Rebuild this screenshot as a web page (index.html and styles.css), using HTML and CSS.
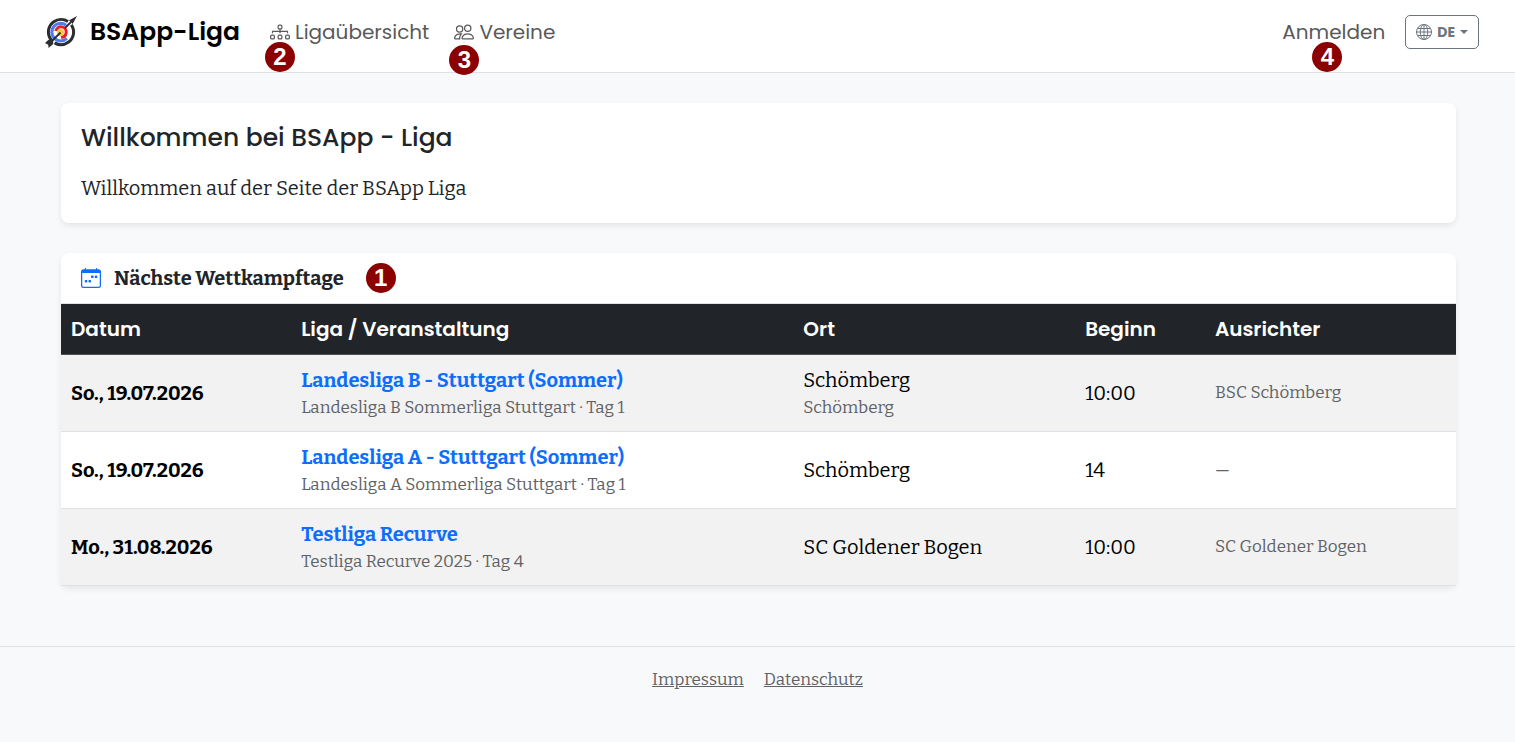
FILE: index.html
```html
<!DOCTYPE html>
<html lang="de">
<head>
<meta charset="utf-8">
<meta name="viewport" content="width=device-width, initial-scale=1">
<title>BSApp-Liga</title>
<link rel="stylesheet" href="styles.css">
</head>
<body>
<header class="navbar">
  <a class="brand" href="#">
    <svg class="brand-logo" viewBox="0 0 34 34" aria-hidden="true">
      <circle cx="17" cy="17" r="12.6" fill="#fff" stroke="#2b2d30" stroke-width="3" stroke-dasharray="34 3 37 5.2" transform="rotate(-35 17 17)"/>
      <circle cx="16.6" cy="17.2" r="8.8" fill="none" stroke="#4f7df0" stroke-width="3.2" stroke-dasharray="40 15.3" transform="rotate(45 16.6 17.2)"/>
      <circle cx="17" cy="17" r="5.2" fill="none" stroke="#ee1c25" stroke-width="3" stroke-dasharray="23 9.7" transform="rotate(190 17 17)"/>
      <circle cx="16.5" cy="17.5" r="3.4" fill="#f9c440"/>
      <path d="M5 29 16.5 17.5M21 13 29 5" stroke="#2b2d30" stroke-width="1.8"/>
      <path d="M33 1 24.800 5.500 27.500 6.500 28.500 9.200zM1 28 4.500 24.800 9.200 24.800 9.200 29 4.600 33 4.200 29.800z" fill="#2b2d30"/>
    </svg>
    <span>BSApp-Liga</span>
  </a>
  <nav class="nav">
    <a class="nav-link" href="#">
      <svg class="icon" viewBox="0 0 16 16" aria-hidden="true"><path fill-rule="evenodd" d="M6 3.5A1.500 1.500 0 0 1 7.500 2h1A1.500 1.500 0 0 1 10 3.500v1A1.500 1.500 0 0 1 8.500 6v1H14a.5.5 0 0 1 .5.5v1a.5.5 0 0 1-1 0V8h-5v.5a.5.5 0 0 1-1 0V8h-5v.5a.5.5 0 0 1-1 0v-1A.5.5 0 0 1 2 7h5.500V6A1.500 1.500 0 0 1 6 4.500zM8.500 5a.5.5 0 0 0 .5-.5v-1a.5.5 0 0 0-.5-.5h-1a.5.5 0 0 0-.5.5v1a.5.5 0 0 0 .5.5zM0 11.500A1.500 1.500 0 0 1 1.500 10h1A1.500 1.500 0 0 1 4 11.500v1A1.500 1.500 0 0 1 2.500 14h-1A1.500 1.500 0 0 1 0 12.500zm1.500-.5a.5.5 0 0 0-.5.5v1a.5.5 0 0 0 .5.5h1a.5.5 0 0 0 .5-.5v-1a.5.5 0 0 0-.5-.5zm4.500.5A1.500 1.500 0 0 1 7.500 10h1a1.500 1.500 0 0 1 1.500 1.500v1A1.500 1.500 0 0 1 8.500 14h-1A1.500 1.500 0 0 1 6 12.500zm1.500-.5a.5.5 0 0 0-.5.5v1a.5.5 0 0 0 .5.5h1a.5.5 0 0 0 .5-.5v-1a.5.5 0 0 0-.5-.5zm4.500.5a1.500 1.500 0 0 1 1.500-1.500h1a1.500 1.500 0 0 1 1.500 1.500v1a1.500 1.500 0 0 1-1.500 1.500h-1a1.500 1.500 0 0 1-1.500-1.500zm1.500-.5a.5.5 0 0 0-.5.5v1a.5.5 0 0 0 .5.5h1a.5.5 0 0 0 .5-.5v-1a.5.5 0 0 0-.5-.5z"/></svg>
      <span>Ligaübersicht</span>
      <span class="marker marker-league">2</span>
    </a>
    <a class="nav-link" href="#">
      <svg class="icon" viewBox="0 0 16 16" aria-hidden="true"><path d="M15 14s1 0 1-1-1-4-5-4-5 3-5 4 1 1 1 1zm-7.978-1L7 12.996c.001-.264.167-1.030.760-1.720C8.312 10.629 9.282 10 11 10c1.717 0 2.687.630 3.240 1.276.593.690.758 1.457.760 1.720l-.008.002-.014.002zM11 7a2 2 0 1 0 0-4 2 2 0 0 0 0 4m3-2a3 3 0 1 1-6 0 3 3 0 0 1 6 0M6.936 9.280a6 6 0 0 0-1.230-.247A7 7 0 0 0 5 9c-4 0-5 3-5 4q0 1 1 1h4.216A2.240 2.240 0 0 1 5 13c0-1.010.377-2.042 1.090-2.904.243-.294.526-.569.846-.816M4.920 10A5.500 5.500 0 0 0 4 13H1c0-.260.164-1.030.760-1.724.545-.636 1.492-1.256 3.160-1.275ZM1.500 5.500a3 3 0 1 1 6 0 3 3 0 0 1-6 0m3-2a2 2 0 1 0 0 4 2 2 0 0 0 0-4"/></svg>
      <span>Vereine</span>
      <span class="marker marker-clubs">3</span>
    </a>
  </nav>
  <div class="account">
    <a class="nav-link" href="#">Anmelden<span class="marker marker-login">4</span></a>
    <button class="lang" type="button" aria-haspopup="true">
      <svg class="icon-globe" viewBox="0 0 16 16" fill="none" stroke="currentColor" aria-hidden="true"><circle cx="8" cy="8" r="7.500"/><ellipse cx="8" cy="8" rx="3.700" ry="7.500"/><path d="M8 .5v15M.5 8h15M1.700 4.500h12.600M1.700 11.500h12.600"/></svg>
      <span>DE</span>
      <span class="caret"></span>
    </button>
  </div>
</header>

<main class="content">
  <section class="card welcome">
    <h1>Willkommen bei BSApp - Liga</h1>
    <p>Willkommen auf der Seite der BSApp Liga</p>
  </section>

  <section class="card">
    <div class="card-header">
      <svg class="icon icon-calendar" viewBox="0 0 16 16" aria-hidden="true"><path d="M11 6.500a.5.5 0 0 1 .5-.5h1a.5.5 0 0 1 .5.5v1a.5.5 0 0 1-.5.5h-1a.5.5 0 0 1-.5-.5zm-3 0a.5.5 0 0 1 .5-.5h1a.5.5 0 0 1 .5.5v1a.5.5 0 0 1-.5.5h-1a.5.5 0 0 1-.5-.5zm-5 3.500a.5.5 0 0 1 .5-.5h1a.5.5 0 0 1 .5.5v1a.5.5 0 0 1-.5.5h-1a.5.5 0 0 1-.5-.5zm3 0a.5.5 0 0 1 .5-.5h1a.5.5 0 0 1 .5.5v1a.5.5 0 0 1-.5.5h-1a.5.5 0 0 1-.5-.5z"/><path d="M3.500 0a.5.5 0 0 1 .5.5V1h8V.5a.5.5 0 0 1 1 0V1h1a2 2 0 0 1 2 2v11a2 2 0 0 1-2 2H2a2 2 0 0 1-2-2V3a2 2 0 0 1 2-2h1V.5a.5.5 0 0 1 .5-.5M1 4v10a1 1 0 0 0 1 1h12a1 1 0 0 0 1-1V4z"/></svg>
      <h2>Nächste Wettkampftage<span class="marker marker-days">1</span></h2>
    </div>
    <table class="events">
      <colgroup><col class="col-date"><col class="col-league"><col class="col-place"><col class="col-start"><col class="col-host"></colgroup>
      <thead>
        <tr><th scope="col">Datum</th><th scope="col">Liga / Veranstaltung</th><th scope="col">Ort</th><th scope="col">Beginn</th><th scope="col">Ausrichter</th></tr>
      </thead>
      <tbody>
        <tr>
          <td class="date">So., 19.07.2026</td>
          <td><a class="league" href="#">Landesliga B - Stuttgart (Sommer)</a><div class="sub">Landesliga B Sommerliga Stuttgart · Tag 1</div></td>
          <td>Schömberg<div class="sub">Schömberg</div></td>
          <td>10:00</td>
          <td class="host">BSC Schömberg</td>
        </tr>
        <tr>
          <td class="date">So., 19.07.2026</td>
          <td><a class="league" href="#">Landesliga A - Stuttgart (Sommer)</a><div class="sub">Landesliga A Sommerliga Stuttgart · Tag 1</div></td>
          <td>Schömberg</td>
          <td>14</td>
          <td class="host">—</td>
        </tr>
        <tr>
          <td class="date">Mo., 31.08.2026</td>
          <td><a class="league" href="#">Testliga Recurve</a><div class="sub">Testliga Recurve 2025 · Tag 4</div></td>
          <td>SC Goldener Bogen</td>
          <td>10:00</td>
          <td class="host">SC Goldener Bogen</td>
        </tr>
      </tbody>
    </table>
  </section>
</main>

<footer class="footer">
  <a href="#">Impressum</a>
  <a href="#">Datenschutz</a>
</footer>
</body>
</html>
```
FILE: styles.css
```css
:root {
  --sans: Poppins, Inter, "Liberation Sans", sans-serif;
  --serif: Bitter, "DejaVu Serif Condensed", "DejaVu Serif", serif;
  --muted: #5f6265;
  --line: #dee2e6;
}

* { box-sizing: border-box; }

body {
  margin: 0;
  background: #f8f9fb;
  color: #212529;
  font-family: var(--serif);
  font-size: 20px;
  line-height: 30px;
}

h1, h2, p { margin: 0; }

.navbar {
  display: flex;
  align-items: center;
  height: 73px;
  padding: 0 36px 8px 44px;
  background: #fff;
  border-bottom: 1px solid var(--line);
  font-family: var(--sans);
}

.brand {
  display: flex;
  align-items: center;
  gap: 12px;
  color: #000;
  font-size: 25px;
  font-weight: 600;
  text-decoration: none;
}

.brand-logo { width: 34px; height: 34px; }

.nav {
  display: flex;
  gap: 25px;
  margin-left: 30px;
}

.nav-link {
  position: relative;
  display: flex;
  align-items: center;
  gap: 5px;
  color: #595959;
  font-size: 20px;
  text-decoration: none;
}

.icon { width: 20px; height: 20px; fill: currentColor; }

.account {
  display: flex;
  align-items: center;
  gap: 20px;
  margin-left: auto;
}

.lang {
  display: flex;
  align-items: center;
  gap: 5px;
  height: 34px;
  padding: 0 10px;
  border: 1px solid #6c757d;
  border-radius: 5px;
  background: #fff;
  color: #6c757d;
  font-family: var(--sans);
  font-size: 14px;
  font-weight: 700;
}

.icon-globe { width: 16px; height: 16px; }

.caret {
  border: 4px solid transparent;
  border-top-color: currentColor;
  border-bottom: 0;
}

.marker {
  position: absolute;
  width: 30px;
  height: 30px;
  border-radius: 50%;
  background: #8b0000;
  color: #fff;
  font: 700 24px/30px "Liberation Sans", Arial, sans-serif;
  text-align: center;
}

.marker-league { left: -5px; top: 25px; }
.marker-clubs { left: -5px; top: 28px; }
.marker-login { left: 30px; top: 25px; }
.marker-days { left: 100%; top: 0; margin-left: 22px; }

.content {
  display: grid;
  gap: 30px;
  padding: 30px 59px 60px 61px;
}

.card {
  border-radius: 8px;
  background: #fff;
  box-shadow: 0 3px 6px rgba(0, 0, 0, 0.08);
}

.welcome {
  display: grid;
  gap: 20px;
  padding: 20px;
}

.welcome h1 {
  font-family: var(--sans);
  font-size: 25px;
  font-weight: 500;
  line-height: 30px;
}

.card-header {
  display: flex;
  align-items: center;
  gap: 13px;
  padding: 10px 20px;
  border-bottom: 1px solid var(--line);
}

.card-header h2 {
  position: relative;
  font-size: 20px;
  font-weight: 700;
}

.icon-calendar { color: #0d6efd; }

.events {
  width: 100%;
  table-layout: fixed;
  border-collapse: separate;
  border-spacing: 0;
  color: #000;
}

.col-date { width: 16.5%; }
.col-league { width: 36%; }
.col-place { width: 20.2%; }
.col-start { width: 9.3%; }
.col-host { width: 18%; }

.events th {
  padding: 10px;
  border-bottom: 1px solid #4d5154;
  background: #212529;
  color: #fff;
  font-family: var(--sans);
  font-size: 20px;
  font-weight: 600;
  text-align: left;
}

.events td {
  padding: 10px;
  border-bottom: 1px solid var(--line);
  vertical-align: middle;
}

.events tbody tr:nth-child(odd) { background: #f2f2f2; }

.date, .league { font-weight: 700; }

.league { color: #0d6efd; text-decoration: none; }

.sub, .events .host { color: var(--muted); font-size: 17px; }

.sub { line-height: 26px; }

.footer {
  display: flex;
  justify-content: center;
  gap: 20px;
  padding: 18px 0;
  border-top: 1px solid var(--line);
  font-size: 17px;
}

.footer a { color: var(--muted); }
```
